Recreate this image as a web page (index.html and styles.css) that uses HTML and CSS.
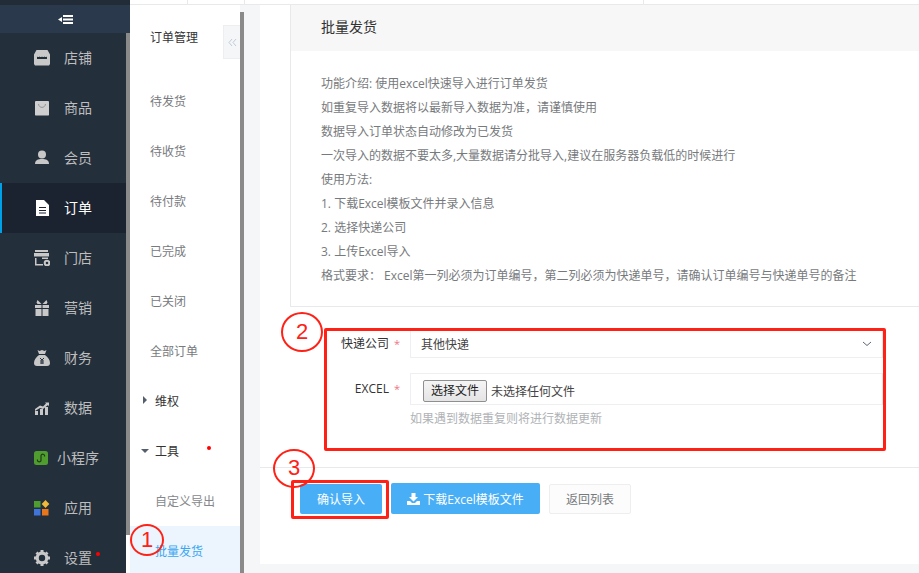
FILE: index.html
```html
<!DOCTYPE html>
<html lang="zh">
<head>
<meta charset="utf-8">
<title>批量发货</title>
<link rel="stylesheet" href="styles.css">
</head>
<body>
<div class="app">
  <aside class="nav">
    <div class="nav-top"><div class="nav-cap"></div><div class="nav-toggle"><svg width="15" height="9" viewBox="0 0 15 9"><path d="M0 4.500l4-2.500v5z M5 0h10v2H5z M5 3.500h10v2H5z M5 7h10v2H5z" fill="#fff"/></svg></div></div>
    <div class="nav-body">
      <ul class="nav-list">
        <li class="nav-item"><svg class="ni" viewBox="0 0 16 16" width="16" height="16"><path d="M2.500 0h11L16 4.500V14l-1 1.500H1L0 14V4.500z M3 6.500V9h10V6.500c-1 .8-1.500.8-2.500 0-1 .8-1.500.8-2.500 0-1 .8-1.500.8-2.500 0-1 .8-1.500.8-2.500 0z" fill="#c8c8c8" fill-rule="evenodd"/></svg><span>店铺</span></li>
        <li class="nav-item"><svg class="ni" viewBox="0 0 16 16" width="16" height="16"><path d="M1.500 1h13l.5.500V15l-.5.500h-13L1 15V1.500z" fill="#cfcfcf"/><path d="M4.500 4c.5 4.500 6.500 4.500 7 0" fill="none" stroke="#8f949a" stroke-width="1"/></svg><span>商品</span></li>
        <li class="nav-item"><svg class="ni" viewBox="0 0 16 16" width="16" height="16"><circle cx="8" cy="4.500" r="4" fill="#c8c8c8"/><path d="M1 14c0-4 3-5 7-5s7 1 7 5z" fill="#c8c8c8"/></svg><span>会员</span></li>
        <li class="nav-item is-active"><svg class="ni" viewBox="0 0 16 16" width="16" height="16"><path d="M2 0h8l5 5v11H2z M5 7v1h7V7z M5 10v1h7v-1z M5 12.500v1h7v-1z" fill="#fff" fill-rule="evenodd"/></svg><span>订单</span></li>
        <li class="nav-item"><svg class="ni" viewBox="0 0 16 16" width="16" height="16"><path d="M1 0h13v2H1z M0 3h15v3.500H0z" fill="#c8c8c8"/><path d="M1 8h1.500v6H9v1.500H1z M8 7.500h6V9H8z" fill="#c8c8c8"/><circle cx="13" cy="13" r="2.300" fill="none" stroke="#c8c8c8" stroke-width="2"/></svg><span>门店</span></li>
        <li class="nav-item"><svg class="ni" viewBox="0 0 16 16" width="16" height="16"><path d="M1 5h6.500v3H1z M8.500 5H15v3H8.500z M1.500 9h6v7h-6z M8.500 9h6v7h-6z" fill="#c8c8c8"/><path d="M3.500 0l4 4h-4l-1-1.500z M12.500 0l-4 4h4l1-1.500z" fill="#c8c8c8"/></svg><span>营销</span></li>
        <li class="nav-item"><svg class="ni" viewBox="0 0 16 16" width="16" height="16"><path d="M3.500 0l2 1 2.500-1 2.500 1 2-1-1.500 4h-6z M5 5h6c3 2 5 5 5 8 0 2-1 3-3 3H3c-2 0-3-1-3-3 0-3 2-6 5-8z" fill="#c8c8c8"/><path d="M6 8l2 2 2-2M8 10v4M6 11h4M6 13h4" stroke="#242f3c" stroke-width="1" fill="none"/></svg><span>财务</span></li>
        <li class="nav-item"><svg class="ni" viewBox="0 0 16 16" width="16" height="16"><path d="M1 11h3v4H1z M6 9h3v6H6z M11 7h3v8h-3z M1 9l5-3.500 3 1 3-3-1-1h4v4l-1-1.500-5 4-3-1-5 3z" fill="#c8c8c8"/></svg><span>数据</span></li>
        <li class="nav-item nav-item-wide"><svg class="ni" viewBox="0 0 16 16" width="16" height="16"><rect x="0" y="1" width="14" height="14" rx="2.500" fill="#4f9d2f"/><path d="M3.500 9.500a1.800 1.800 0 1 0 3.500.8V5.700a1.800 1.800 0 1 1 3.500.8" fill="none" stroke="#1f3a16" stroke-width="1.200"/></svg><span>小程序</span></li>
        <li class="nav-item"><svg class="ni" viewBox="0 0 16 16" width="16" height="16"><rect x="0" y="1" width="6.500" height="6.500" fill="#4f9d2f"/><path d="M11.500 0l3.800 4-3.800 4-3.800-4z" fill="#f0b93a"/><rect x="0" y="9" width="6.500" height="6.500" fill="#3f74d9"/><rect x="8" y="9" width="6.500" height="6.500" fill="#e8761a"/></svg><span>应用</span></li>
        <li class="nav-item"><svg class="ni" viewBox="0 0 16 16" width="16" height="16"><circle cx="8" cy="8" r="4.800" fill="none" stroke="#c8c8c8" stroke-width="3.200"/><path d="M6.500 0h3v3h-3z M6.500 13h3v3h-3z M0 6.500h3v3H0z M13 6.500h3v3h-3z M1.500 3.500l2-2 2 2-2 2z M10.500 3.500l2-2 2 2-2 2z M1.500 12.500l2-2 2 2-2 2z M10.500 12.500l2-2 2 2-2 2z" fill="#c8c8c8"/></svg><span>设置</span><i class="dot dot-nav"></i></li>
      </ul>
      <div class="nav-scroll"><div class="nav-thumb"></div></div>
    </div>
  </aside>
  <div class="right">
    <div class="topline"><span class="tl-cell tl-a"></span><span class="tl-cell tl-b"></span><span class="tl-cell tl-c"></span></div>
    <div class="workspace">
      <aside class="sub">
        <div class="sub-title">订单管理</div>
        <div class="sub-fold"><svg width="9" height="9" viewBox="0 0 9 9"><path d="M4 1L1 4.500 4 8M8 1L5 4.500 8 8" fill="none" stroke="#c3ccd6" stroke-width="1"/></svg></div>
        <ul class="sub-list">
          <li class="sub-item">待发货</li>
          <li class="sub-item">待收货</li>
          <li class="sub-item">待付款</li>
          <li class="sub-item">已完成</li>
          <li class="sub-item">已关闭</li>
          <li class="sub-item">全部订单</li>
          <li class="sub-item sub-group"><i class="tri tri-right"></i>维权</li>
          <li class="sub-item sub-group"><i class="tri tri-down"></i>工具<i class="dot dot-sub"></i></li>
          <li class="sub-item sub-child">自定义导出</li>
          <li class="sub-item sub-child is-current">批量发货</li>
        </ul>
      </aside>
      <div class="strip"></div>
      <main class="canvas">
        <div class="card">
          <div class="info">
            <h1 class="info-head">批量发货</h1>
            <div class="info-body">
              <p>功能介绍: 使用excel快速导入进行订单发货</p>
              <p>如重复导入数据将以最新导入数据为准，请谨慎使用</p>
              <p>数据导入订单状态自动修改为已发货</p>
              <p>一次导入的数据不要太多,大量数据请分批导入,建议在服务器负载低的时候进行</p>
              <p>使用方法:</p>
              <p>1. 下载Excel模板文件并录入信息</p>
              <p>2. 选择快递公司</p>
              <p>3. 上传Excel导入</p>
              <p>格式要求： Excel第一列必须为订单编号，第二列必须为快递单号，请确认订单编号与快递单号的备注</p>
            </div>
          </div>
          <form class="form">
            <div class="row row-select">
              <label class="lbl">快递公司<em>*</em></label>
              <div class="ctl ctl-select">其他快递<svg width="10" height="6" viewBox="0 0 10 6"><path d="M1 1l4 3.500L9 1" fill="none" stroke="#5b6675" stroke-width="1"/></svg></div>
            </div>
            <div class="row row-file">
              <label class="lbl">EXCEL<em>*</em></label>
              <div class="ctl ctl-file"><span class="file-btn">选择文件</span><span class="file-name">未选择任何文件</span></div>
            </div>
            <div class="hint">如果遇到数据重复则将进行数据更新</div>
          </form>
          <div class="actions">
            <span class="btn btn-primary btn-confirm">确认导入</span>
            <span class="btn btn-primary btn-dl"><svg width="13" height="12" viewBox="0 0 13 12"><path d="M4.500 0h4v4H11L6.500 8.500 2 4h2.500z M0 8h3l2 2h3l2-2h3v4H0z" fill="#fff"/></svg>下载Excel模板文件</span>
            <span class="btn btn-plain">返回列表</span>
          </div>
        </div>
      </main>
    </div>
  </div>
</div>
<div class="mark mark-box2"></div>
<div class="mark mark-box3"></div>
<div class="mark-num num1">1</div>
<div class="mark-num num2">2</div>
<div class="mark-num num3">3</div>
</body>
</html>
```
FILE: styles.css
```css
* { box-sizing: border-box; }
html, body { margin: 0; padding: 0; }
body { width: 919px; height: 573px; overflow: hidden; position: relative; font-family: "Open Sans", "Noto Sans CJK SC", sans-serif; font-size: 13px; color: #676a6c; background: #f4f6f8; }
ul { list-style: none; margin: 0; padding: 0; }
p { margin: 0; }
.app { display: flex; height: 573px; }

.nav { width: 130px; flex: none; background: #242f3c; display: flex; flex-direction: column; }
.nav-top { flex: none; }
.nav-cap { height: 5px; background: #222c38; }
.nav-toggle { height: 28px; background: #2a394b; display: flex; align-items: center; justify-content: center; }
.nav-body { flex: 1; display: flex; min-height: 0; }
.nav-list { width: 126px; flex: none; }
.nav-scroll { width: 4px; background: #fff; }
.nav-thumb { height: 502px; background: #8a8a8a; }
.nav-item { position: relative; height: 50px; display: flex; align-items: center; padding-left: 34px; color: #bdbdbd; font-size: 14px; }
.nav-item span { padding-bottom: 2px; }
.nav-item .ni { flex: none; margin-right: 14px; }
.nav-item-wide .ni { margin-right: 7px; }
.nav-item.is-active { background: #1b2330; color: #fff; border-left: 2px solid #00a0e9; padding-left: 32px; }
.dot { display: block; width: 4px; height: 4px; border-radius: 50%; background: #f00; position: absolute; }
.dot-nav { left: 96px; top: 19px; }

.right { flex: 1; min-width: 0; display: flex; flex-direction: column; }
.topline { height: 5px; flex: none; background: #fff; border-bottom: 1px solid #e9e9eb; display: flex; }
.tl-cell { border-right: 1px solid #e9e9eb; }
.tl-a { width: 58px; }
.tl-b { width: 57px; }
.tl-c { width: 399px; }
.workspace { flex: 1; min-height: 0; display: flex; }

.sub { width: 110px; flex: none; background: #fff; position: relative; }
.sub-title { height: 64px; padding: 24px 0 0 20px; font-size: 12px; color: #333; line-height: 18px; }
.sub-fold { position: absolute; left: 93px; top: 20px; width: 17px; height: 34px; background: #f4f6f8; border: 1px solid #eceef0; border-right: 0; display: flex; align-items: center; justify-content: center; }
.sub-list { padding-top: 7px; }
.sub-item { position: relative; height: 50px; line-height: 52px; padding-left: 20px; font-size: 12px; color: #777a7e; }
.sub-group { padding-left: 25px; color: #333; }
.sub-child { padding-left: 25px; color: #85888b; }
.sub-child.is-current { background: #ecf5fd; color: #3ba6f0; }
.tri { position: absolute; display: block; width: 0; height: 0; }
.tri-right { left: 13px; top: 20px; border-left: 4px solid #555f6b; border-top: 4px solid transparent; border-bottom: 4px solid transparent; }
.tri-down { left: 11px; top: 23px; border-top: 4px solid #555f6b; border-left: 4px solid transparent; border-right: 4px solid transparent; }
.dot-sub { left: 77px; top: 20px; }

.strip { width: 4px; flex: none; margin-top: 7px; background: #8a8a8a; }
.canvas { flex: 1; min-width: 0; padding: 0 0 9px 16px; }
.card { background: #fff; height: 100%; display: flex; flex-direction: column; }
.info { margin-left: 30px; height: 302px; border-left: 1px solid #e7eaec; border-bottom: 1px solid #e7eaec; flex: none; }
.info-head { margin: 0; height: 46px; background: #f7f7f7; font-size: 14px; font-weight: 400; color: #333; line-height: 44px; padding-left: 30px; }
.info-body { padding: 21px 0 0 30px; font-size: 12px; line-height: 24px; color: #777a7d; }

.form { margin: 23px 0 0 50px; height: 130px; flex: none; }
.row { display: flex; }
.lbl { width: 100px; text-align: right; padding-right: 10px; font-size: 12px; color: #333; white-space: nowrap; }
.lbl em { font-style: normal; color: #ed7585; margin-left: 5px; font-size: 11px; }
.row-select .lbl { line-height: 28px; }
.row-file .lbl { line-height: 31px; }
.ctl { width: 473px; border: 1px solid #eeeff1; border-right-color: #e7e7e7; font-size: 12px; }
.row-select { height: 28px; }
.row-file { margin-top: 15px; height: 32px; }
.ctl-select { height: 28px; border-top: 0; display: flex; align-items: center; justify-content: space-between; padding: 0 10px; color: #444; }
.ctl-file { height: 32px; display: flex; align-items: center; padding: 3px 0 0 12px; color: #444; }
.file-btn { width: 64px; height: 22px; background: linear-gradient(#f5f5f5, #e4e4e4); border: 1px solid #8f8f8f; border-radius: 2px; text-align: center; line-height: 20px; color: #222; margin-right: 4px; }
.hint { margin: 6px 0 0 100px; font-size: 12px; color: #b0b3b6; line-height: 16px; }

.actions { border-top: 1px solid #e7eaec; margin-top: 7px; padding: 15px 0 0 40px; display: flex; align-items: flex-start; gap: 9px; flex: none; }
.btn { display: flex; align-items: center; justify-content: center; border-radius: 2px; font-size: 12px; }
.btn-primary { background: #48aef6; color: #fff; }
.btn-confirm { width: 82px; height: 30px; margin-top: 1px; }
.btn-dl { width: 149px; height: 31px; gap: 3px; }
.btn-dl svg { flex: none; }
.btn-plain { width: 82px; height: 30px; margin-top: 1px; background: #fcfcfc; border: 1px solid #eeeeee; color: #777a7d; }

.mark { position: absolute; border: 3px solid #ff2016; border-radius: 2px; }
.mark-box2 { left: 324px; top: 328px; width: 562px; height: 123px; }
.mark-box3 { left: 291px; top: 480px; width: 98px; height: 39px; }
.mark-num { position: absolute; border: 2px solid #ff2016; border-radius: 50%; color: #ff2016; font-family: "Liberation Sans", sans-serif; font-size: 22px; text-align: center; }
.num1 { left: 130px; top: 524px; width: 34px; height: 32px; line-height: 27px; }
.num2 { left: 281px; top: 312px; width: 42px; height: 40px; line-height: 35px; }
.num3 { left: 273px; top: 449px; width: 42px; height: 39px; line-height: 34px; }
```
